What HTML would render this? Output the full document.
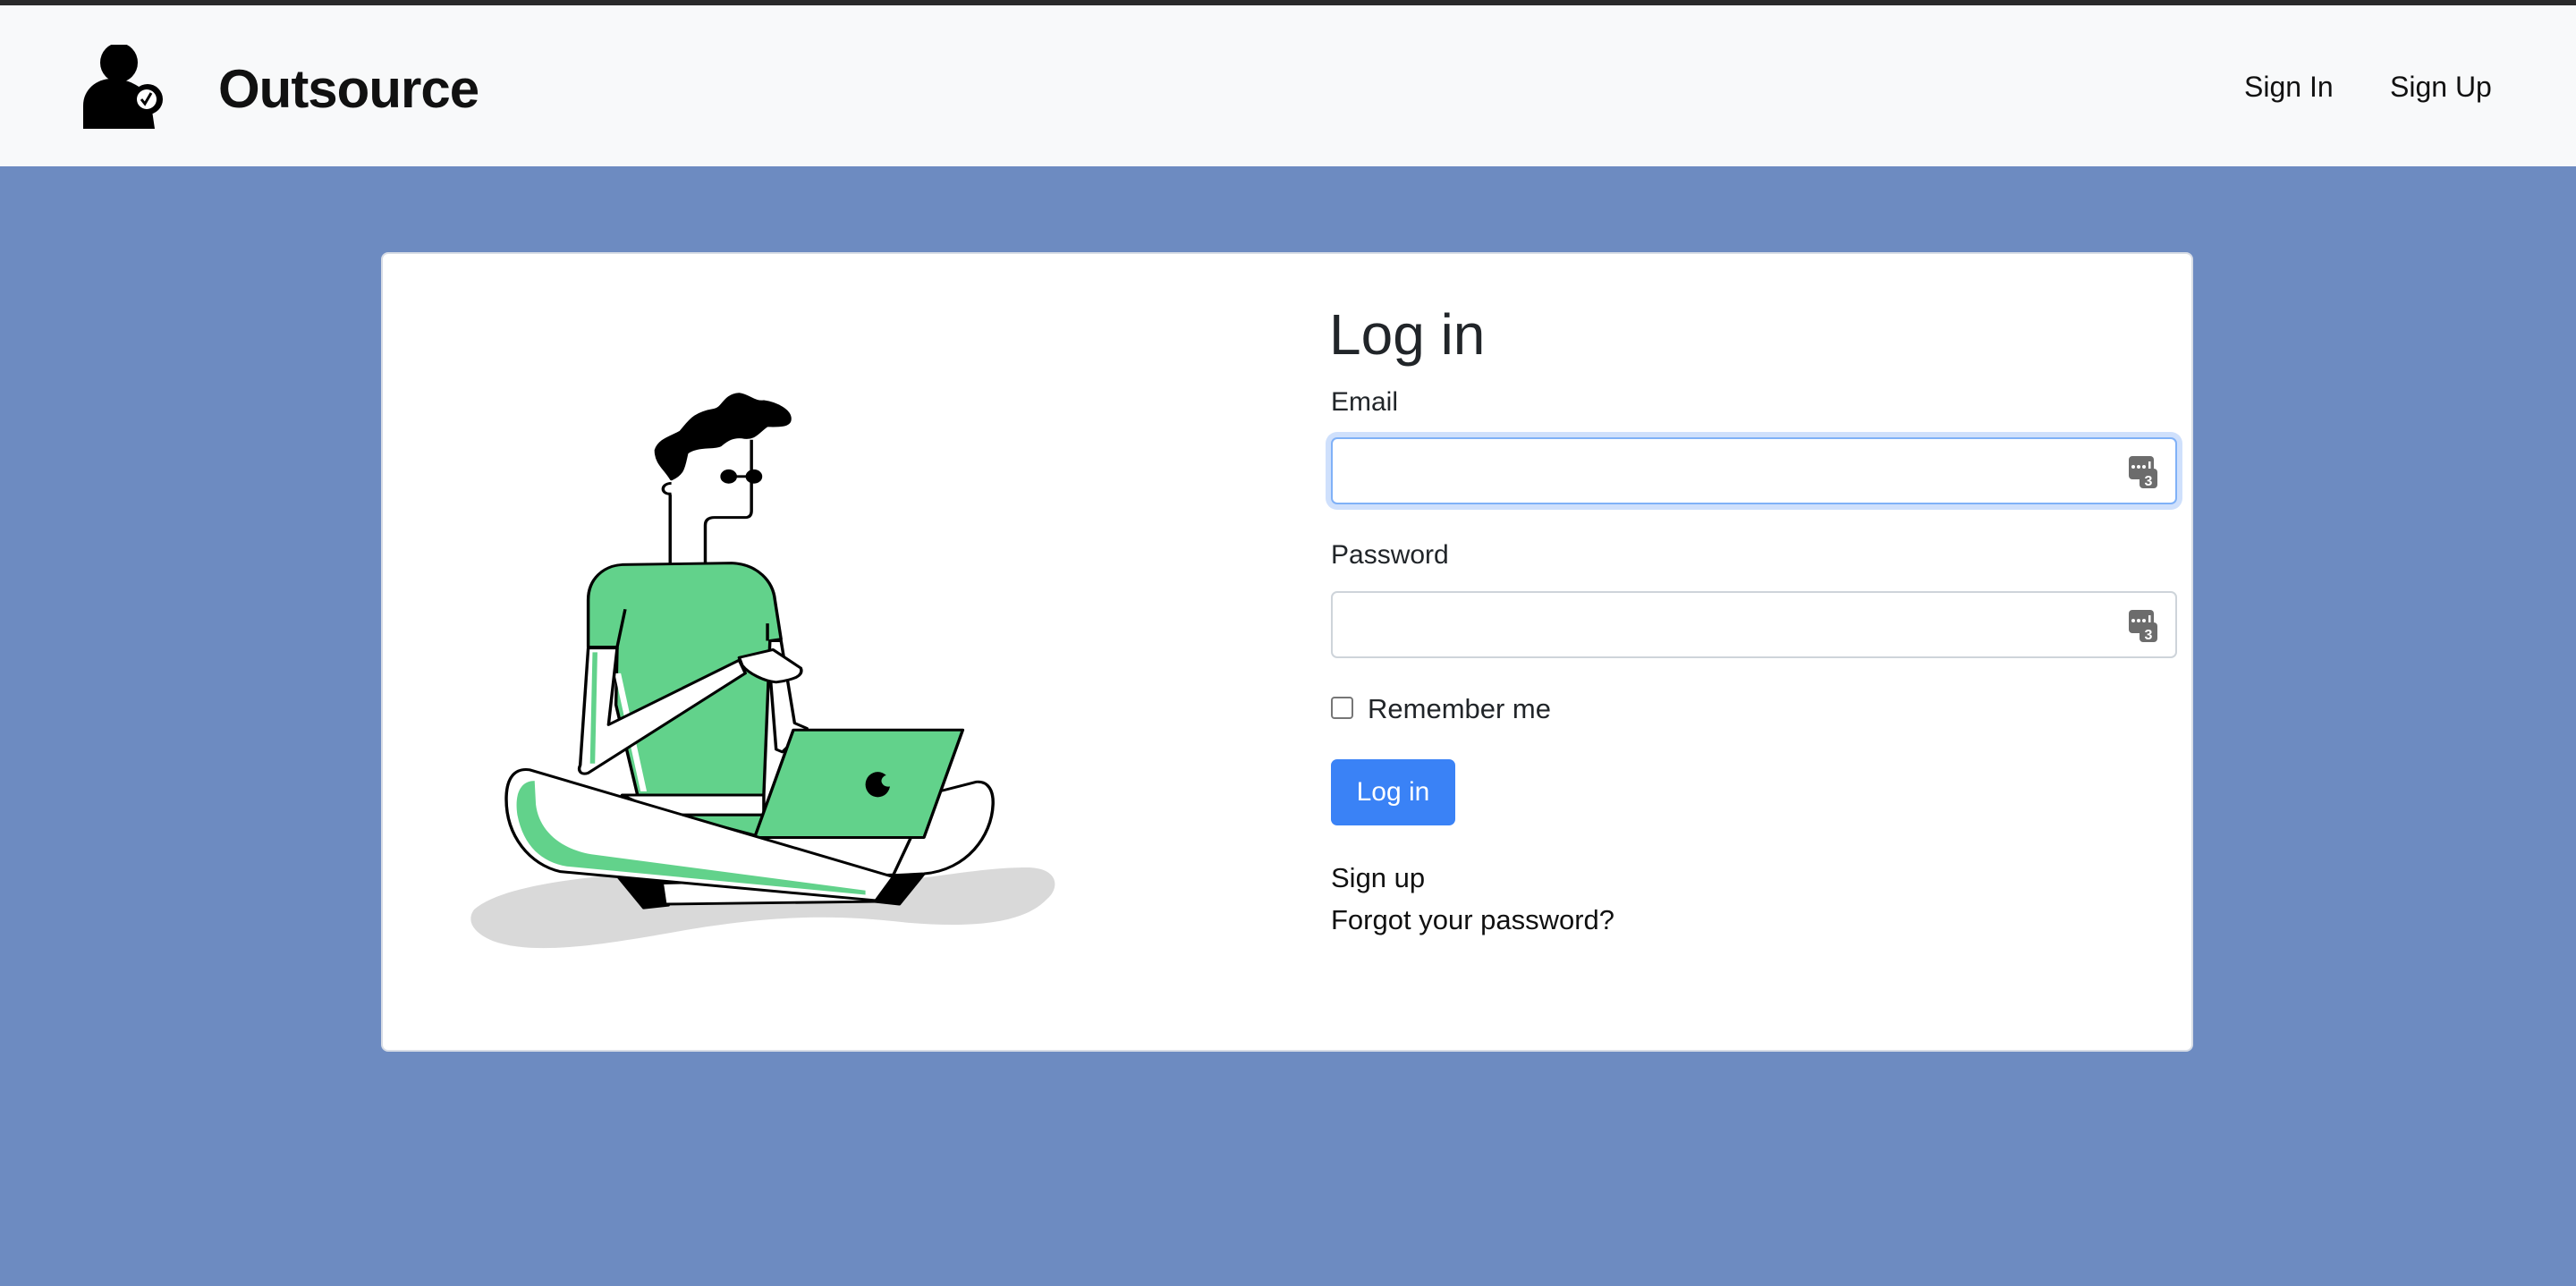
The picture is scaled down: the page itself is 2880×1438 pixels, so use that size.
<!DOCTYPE html>
<html><head><meta charset="utf-8"><style>
*{margin:0;padding:0;box-sizing:border-box}
html,body{width:2880px;height:1438px;overflow:hidden;background:#6d8bc1;font-family:"Liberation Sans",sans-serif;color:#212529}
.top{position:absolute;left:0;top:0;width:2880px;height:6px;background:#2a2a2a}
.nav{position:absolute;left:0;top:6px;width:2880px;height:180px;background:#f8f9fa}
.brand{position:absolute;left:244px;top:59px;font-size:60px;font-weight:bold;color:#111;letter-spacing:-1px}
.nl{position:absolute;top:73px;font-size:32px;color:#111}
.card{position:absolute;left:426px;top:282px;width:2026px;height:894px;background:#fff;border:2px solid #d8dde6;border-radius:8px}
.abs{position:absolute}
h1{position:absolute;left:1486px;top:337px;font-size:64px;font-weight:normal;color:#212529}
.lbl{position:absolute;left:1488px;font-size:30px}
.inp{position:absolute;left:1488px;width:946px;height:75px;border:2px solid #ced4da;border-radius:7px;background:#fff}
.inp.f{border-color:#80b1f7;box-shadow:0 0 0 6px #cfe0fc}
.ic{position:absolute;right:20px;top:19px}
.btn{position:absolute;left:1488px;top:849px;width:139px;height:74px;background:#3a82f6;border-radius:7px;color:#fff;font-size:30px;text-align:center;line-height:74px}
.lnk{position:absolute;left:1488px;font-size:31px;color:#111}
</style></head><body>
<div class="top"></div>
<div class="nav">
<svg class="abs" style="left:90px;top:44px" width="100" height="100" viewBox="90 50 100 100">
<ellipse cx="133" cy="70" rx="21" ry="22" fill="#000"/>
<path d="M93,144 L93,118 C93,100 108,88 125,88 C145,88 160,98 168,110 L173,144 Z" fill="#000"/>
<circle cx="165" cy="111" r="17" fill="#000"/>
<circle cx="164" cy="111" r="11" fill="#fff"/>
<path d="M158,111 L162,116 L169,104" stroke="#000" stroke-width="3" fill="none"/>
</svg>
<div class="brand">Outsource</div>
<div class="nl" style="left:2509px">Sign In</div>
<div class="nl" style="left:2672px">Sign Up</div>
</div>
<div class="card"></div>
<svg class="abs" style="left:420px;top:260px" width="1080" height="920" viewBox="0 0 1568 1568" preserveAspectRatio="none">
<g stroke="#000" stroke-width="5" stroke-linejoin="round">
<path d="M160,1290 C200,1250 300,1235 380,1225 L700,1240 C850,1250 950,1210 1060,1210 C1110,1212 1110,1250 1090,1270 C1050,1320 960,1325 860,1315 C750,1300 650,1300 500,1330 C380,1355 260,1380 190,1350 C150,1330 150,1305 160,1290Z" fill="#d9d9d9" stroke="none"/>
<path d="M395,1230 L470,1235 L475,1282 L435,1287Z" fill="#000"/>
<path d="M815,1225 L890,1222 L850,1280 L810,1275Z" fill="#000"/>
<path d="M465,1240 L820,1230 L815,1275 L470,1280Z" fill="#fff"/>
<path d="M915,1065 L975,1047 C995,1045 1003,1065 1002,1090 C1000,1150 960,1215 890,1222 L840,1225 L870,1150Z" fill="#fff"/>
<path d="M636,778 L658,778 L680,935 L700,945 L660,990 L650,985Z" fill="#fff"/>
<path d="M400,633 L578,630 C620,632 645,665 648,700 L658,775 L640,778 L630,1072 L425,1072 L390,900 L392,790 L345,790 L345,700 C345,660 370,635 400,633Z" fill="#62d28b"/>
<path d="M388,840 L430,1065 L440,1065 L398,840Z" fill="#fff" stroke="none"/>
<path d="M400,1072 L630,1072 L630,1110 L470,1110Z" fill="#fff"/>
<path d="M490,1110 L630,1110 L620,1150Z" fill="#62d28b"/>
<path d="M405,718 L392,790 M636,745 L636,778" fill="none"/>
<path d="M345,792 L392,792 L378,938 L590,815 L600,840 L345,1030 C332,1035 328,1025 332,1015Z" fill="#fff"/>
<path d="M352,800 L348,1012 L356,1012 L360,800Z" fill="#62d28b" stroke="none"/>
<path d="M590,810 L645,795 L690,830 C695,845 680,852 650,857 C630,855 605,840 595,825Z" fill="#fff"/>
<path d="M678,948 L953,948 L890,1153 L615,1153Z" fill="#62d28b"/>
<path d="M250,1024 C225,1020 212,1040 212,1080 C212,1150 250,1205 300,1218 L812,1273 L840,1228 L250,1024Z" fill="#fff"/>
<path d="M258,1045 C235,1045 225,1070 230,1110 C240,1170 270,1200 310,1208 L795,1262 L795,1254 L350,1185 C300,1175 265,1140 260,1090Z" fill="#62d28b" stroke="none"/>
<path d="M478,630 L478,500 M535,630 L535,558 C535,548 540,543 550,543 L600,543 C608,543 610,537 610,530 L610,395 M573,465 L614,465" fill="none"/>
<path d="M480,478 C462,478 462,500 480,498" fill="none"/>
<circle cx="573" cy="465" r="11" fill="#000"/>
<circle cx="614" cy="465" r="11" fill="#000"/>
<path d="M455,415 C460,395 480,390 495,380 C510,360 515,345 550,338 C565,335 565,310 590,308 C605,310 615,325 630,322 C650,325 675,340 672,358 C670,370 650,368 635,368 C620,380 615,395 595,390 C580,388 570,395 560,405 C550,412 520,405 505,420 C500,445 500,460 480,470 C470,450 455,440 455,415Z" fill="#000"/>
<ellipse cx="815" cy="1052" rx="20" ry="24" fill="#000" stroke="none"/>
<circle cx="832" cy="1045" r="11" fill="#62d28b" stroke="none"/>
</g>
</svg>
<h1>Log in</h1>
<div class="lbl" style="top:433px">Email</div>
<div class="inp f" style="top:489px"><svg class="ic" width="32" height="36" viewBox="0 0 32 36"><rect x="0" y="0" width="28" height="26" rx="4" fill="#6c6c6c"/><rect x="12" y="14" width="20" height="22" rx="4" fill="#6c6c6c"/><circle cx="5" cy="12" r="2" fill="#fff"/><circle cx="11" cy="12" r="2" fill="#fff"/><circle cx="17" cy="12" r="2" fill="#fff"/><rect x="22" y="6" width="2.5" height="8" fill="#fff"/><text x="22" y="33" font-size="16" font-weight="bold" fill="#fff" text-anchor="middle" font-family="Liberation Sans">3</text></svg></div>
<div class="lbl" style="top:604px">Password</div>
<div class="inp" style="top:661px"><svg class="ic" width="32" height="36" viewBox="0 0 32 36"><rect x="0" y="0" width="28" height="26" rx="4" fill="#6c6c6c"/><rect x="12" y="14" width="20" height="22" rx="4" fill="#6c6c6c"/><circle cx="5" cy="12" r="2" fill="#fff"/><circle cx="11" cy="12" r="2" fill="#fff"/><circle cx="17" cy="12" r="2" fill="#fff"/><rect x="22" y="6" width="2.5" height="8" fill="#fff"/><text x="22" y="33" font-size="16" font-weight="bold" fill="#fff" text-anchor="middle" font-family="Liberation Sans">3</text></svg></div>
<div class="abs" style="left:1488px;top:779px;width:25px;height:25px;border:2px solid #767676;border-radius:4px;background:#fff"></div>
<div class="lbl" style="left:1529px;top:775px;font-size:31px">Remember me</div>
<div class="btn">Log in</div>
<div class="lnk" style="top:964px">Sign up</div>
<div class="lnk" style="top:1011px">Forgot your password?</div>
</body></html>
